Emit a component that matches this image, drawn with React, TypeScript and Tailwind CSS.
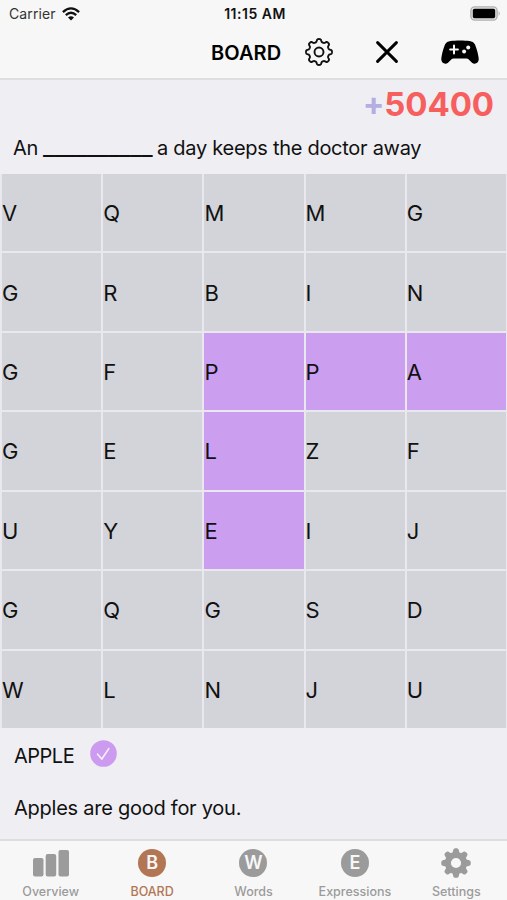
import React from 'react'
import clsx from 'clsx'

const ROWS = ['VQMMG', 'GRBIN', 'GFPPA', 'GELZF', 'UYEIJ', 'GQGSD', 'WLNJU']

// row-column pairs of the found word
const FOUND = ['2-4', '2-3', '2-2', '3-2', '4-2']

// gear contour: eight rounded teeth, radius swings between 10 and 13
const GEAR_POINTS = Array.from({ length: 240 }, (_, i) => {
  const angle = (i / 240) * Math.PI * 2
  const radius = 11.55 + 1.5 * Math.tanh(1.8 * Math.cos(8 * angle))
  return `${(radius * Math.cos(angle)).toFixed(2)},${(radius * Math.sin(angle)).toFixed(2)}`
}).join(' ')

function WifiIcon() {
  return (
    <svg width="18" height="14" viewBox="0 0 18 14" fill="none" stroke="#111" strokeWidth="2.3">
      <path d="M0.9 5.1 Q9 -2.3 17.1 5.1" />
      <path d="M3.8 8.2 Q9 3.4 14.2 8.2" />
      <path d="M9 13.4 L6 10.5 Q9 7.9 12 10.5 Z" fill="#111" stroke="none" />
    </svg>
  )
}

function BatteryIcon() {
  return (
    <svg width="31" height="15" viewBox="0 0 31 15">
      <rect x="0.9" y="0.9" width="26.2" height="13.2" rx="3.8" fill="#e4e4e4" stroke="#b0b0b0" strokeWidth="1.4" />
      <rect x="2.8" y="2.8" width="22.4" height="9.4" rx="1.7" fill="#000" />
      <path d="M28.6 5 Q30.8 7.5 28.6 10 Z" fill="#aaa" />
    </svg>
  )
}

function GearIcon() {
  return (
    <svg width="30" height="30" viewBox="-15 -15 30 30" fill="none" stroke="#111" strokeWidth="1.9" strokeLinejoin="round">
      <polygon points={GEAR_POINTS} />
      <circle r="4.5" />
    </svg>
  )
}

function CloseIcon() {
  return (
    <svg width="22" height="22" viewBox="0 0 22 22" stroke="#000" strokeWidth="2.9" strokeLinecap="round">
      <path d="M1.6 1.6 L20.4 20.4 M20.4 1.6 L1.6 20.4" />
    </svg>
  )
}

function GamepadIcon() {
  return (
    <svg width="38" height="24" viewBox="0 0 38 24">
      <path
        d="M9.5 1 C14 0.2 24 0.2 28.5 1 C31 1.3 33 2.4 34 4.6 C35.8 9 37.2 14 37.7 18.6 C38.2 22.8 33.6 25.5 30.5 22.2 L27.5 19.2 C26.9 18.7 26.4 18.5 25.6 18.5 H12.4 C11.6 18.5 11.1 18.7 10.5 19.2 L7.5 22.2 C4.4 25.5 -0.2 22.8 0.3 18.6 C0.8 14 2.2 9 4 4.6 C5 2.4 7 1.3 9.5 1 Z"
        fill="#000"
      />
      <path d="M13 5.6 V13.4 M9.1 9.5 H16.9" stroke="#f7f7f7" strokeWidth="2" strokeLinecap="round" />
      <circle cx="27.2" cy="7.6" r="2" fill="#f7f7f7" />
      <circle cx="23.1" cy="11.5" r="2" fill="#f7f7f7" />
    </svg>
  )
}

function BarsIcon() {
  return (
    <svg width="36" height="27" viewBox="0 0 36 27" fill="#9b9b9b">
      <rect x="0" y="8" width="10.5" height="18.5" rx="2" />
      <rect x="12.7" y="4" width="10.5" height="22.5" rx="2" />
      <rect x="25.5" y="0" width="10.5" height="26.5" rx="2" />
    </svg>
  )
}

function CogIcon() {
  return (
    <svg width="30" height="30" viewBox="-15 -15 30 30">
      <circle r="8.1" fill="none" stroke="#9b9b9b" strokeWidth="6" />
      {[0, 45, 90, 135, 180, 225, 270, 315].map((angle) => (
        <path
          key={angle}
          d="M-3.7 -9.5 L-2.7 -13.2 Q-2.3 -14.7 -0.9 -14.7 H0.9 Q2.3 -14.7 2.7 -13.2 L3.7 -9.5 Z"
          fill="#9b9b9b"
          transform={`rotate(${angle})`}
        />
      ))}
    </svg>
  )
}

function LetterBadge({ letter, active = false }: { letter: string; active?: boolean }) {
  return (
    <span
      className={clsx(
        'flex h-7 w-7 items-center justify-center rounded-full text-[18px] leading-none font-semibold text-[#f7f7f7]',
        active ? 'bg-[#b27654]' : 'bg-[#9b9b9b]',
      )}
    >
      {letter}
    </span>
  )
}

const TABS = [
  { label: 'Overview', icon: <BarsIcon /> },
  { label: 'BOARD', icon: <LetterBadge letter="B" active />, active: true },
  { label: 'Words', icon: <LetterBadge letter="W" /> },
  { label: 'Expressions', icon: <LetterBadge letter="E" /> },
  { label: 'Settings', icon: <CogIcon /> },
]

export default function App() {
  return (
    <div className="flex h-[900px] w-[507px] flex-col overflow-hidden bg-[#efeef3] font-['Inter','Liberation_Sans',sans-serif] text-[#111]">
      <header className="h-20 shrink-0 border-b-2 border-[#dededf] bg-[#f7f7f7]">
        <div className="grid h-[27px] grid-cols-3 items-center pr-[6px] pl-[9px] text-[14px]">
          <div className="flex items-center gap-[6px]">
            <span className="tracking-[0.1px] text-[#333]">Carrier</span>
            <WifiIcon />
          </div>
          <span className="text-center text-[14px] font-semibold tracking-[0.5px]">11:15 AM</span>
          <div className="flex justify-end">
            <BatteryIcon />
          </div>
        </div>
        <div className="flex h-[50px] items-center pl-[211px]">
          <h1 className="w-[93px] pt-px text-[20px] font-semibold tracking-[0.1px] text-black">BOARD</h1>
          <GearIcon />
          <div className="ml-[42px]">
            <CloseIcon />
          </div>
          <div className="ml-[43px]">
            <GamepadIcon />
          </div>
        </div>
      </header>

      <section className="flex h-[94px] shrink-0 flex-col">
        <div className="flex h-12 items-center justify-end pr-[13px] text-[33px] leading-none font-bold tracking-[-0.1px]">
          <span className="text-[32px] text-[#b4aee3]">+</span>
          <span className="text-[#f65f5e]">50400</span>
        </div>
        <p className="flex h-[39px] items-center pl-[13px] text-[20px] tracking-[-0.28px]">
          <span className="flex items-baseline gap-[5px]">
            <span>An</span>
            <span className="text-[25px] leading-none tracking-[-0.5px]">__________</span>
            <span>a day keeps the doctor away</span>
          </span>
        </p>
      </section>

      <main className="grid h-[554px] shrink-0 grid-cols-5 grid-rows-7 gap-[2px] bg-[#e9e8ee] pr-px pl-[2px]">
        {ROWS.map((row, r) =>
          row.split('').map((letter, c) => (
            <div
              key={`${r}-${c}`}
              className={clsx(
                'flex items-center pt-px text-[22px] leading-none',
                FOUND.includes(`${r}-${c}`) ? 'bg-[#cc9ef0]' : 'bg-[#d3d4d9]',
              )}
            >
              {letter}
            </div>
          )),
        )}
      </main>

      <section className="flex min-h-0 flex-1 flex-col pl-[14px] text-[20px]">
        <div className="flex h-[56px] items-center gap-[16px]">
          <span className="tracking-[-0.5px]">APPLE</span>
          <svg width="27" height="27" viewBox="0 0 27 27" className="-mt-[5px]">
            <circle cx="13.5" cy="13.5" r="13.3" fill="#cc9bf0" />
            <path d="M7.6 14.2 L11.8 19 L18.8 8.6" fill="none" stroke="#f5effb" strokeWidth="1.7" strokeLinecap="round" strokeLinejoin="round" />
          </svg>
        </div>
        <p className="flex h-[48px] items-center tracking-[-0.25px]">Apples are good for you.</p>
      </section>

      <nav className="grid h-[61px] shrink-0 grid-cols-5 border-t-2 border-[#dddddf] bg-[#f7f7f7]">
        {TABS.map((tab) => (
          <div key={tab.label} className="flex flex-col items-center pt-[7px]">
            <div className="flex h-[30px] items-center">{tab.icon}</div>
            <span
              className={clsx(
                'mt-[6px] text-[12.5px] leading-4 font-medium',
                tab.active ? 'text-[#b27654]' : 'text-[#9b9b9b]',
              )}
            >
              {tab.label}
            </span>
          </div>
        ))}
      </nav>
    </div>
  )
}
